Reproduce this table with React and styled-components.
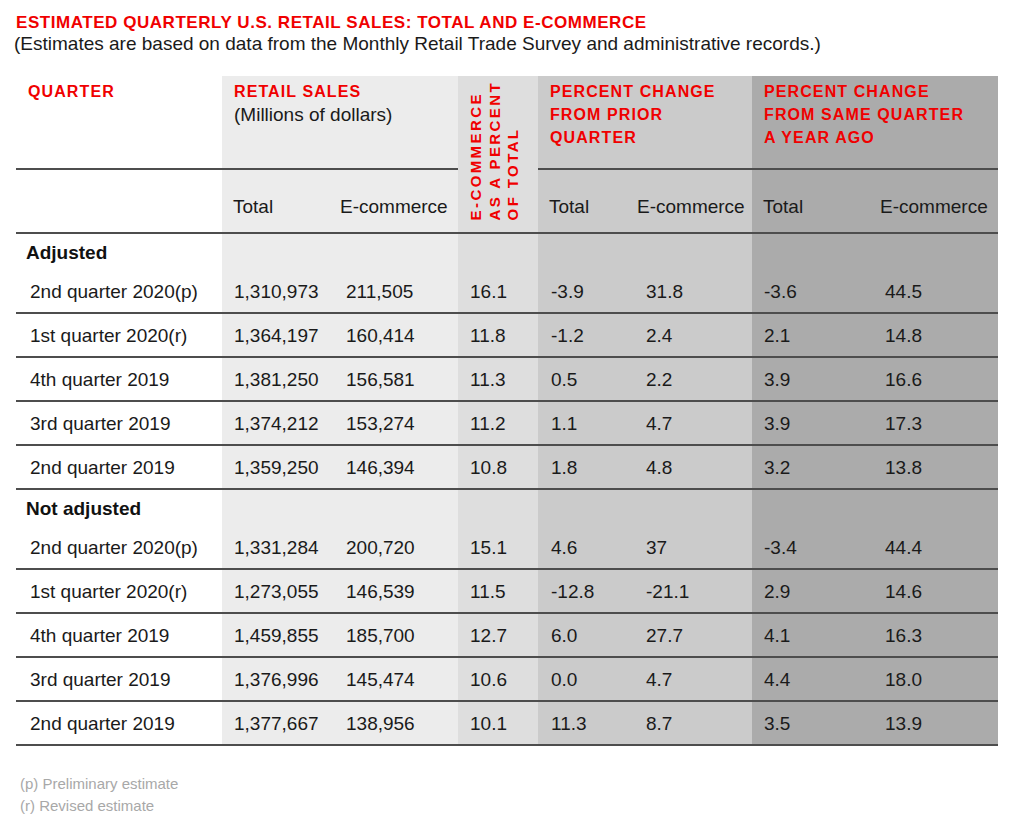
import React from 'react';
import styled, { createGlobalStyle } from 'styled-components';

const GlobalStyle = createGlobalStyle`
  html, body {
    margin: 0;
    padding: 0;
    background: #ffffff;
  }
  body {
    font-family: "Liberation Sans", Arial, sans-serif;
    color: #1a1a1a;
  }
`;

const RED = '#f00000';
const LINE = '2px solid #4d4d4d';

// column layout: width, background, data padding, sub-header padding
const COLUMNS = [
  { width: 206, bg: 'transparent', pad: 14 },
  { width: 108, bg: '#ececec', pad: 12, headPad: 11 },
  { width: 128, bg: '#ececec', pad: 16, headPad: 10 },
  { width: 80, bg: '#dedede', pad: 12 },
  { width: 88, bg: '#cbcbcb', pad: 13, headPad: 11 },
  { width: 126, bg: '#cbcbcb', pad: 20, headPad: 11 },
  { width: 118, bg: '#ababab', pad: 12, headPad: 11 },
  { width: 128, bg: '#ababab', pad: 15, headPad: 10 },
];

const GROUPS = [
  {
    label: 'Adjusted',
    rows: [
      ['2nd quarter 2020(p)', '1,310,973', '211,505', '16.1', '-3.9', '31.8', '-3.6', '44.5'],
      ['1st quarter 2020(r)', '1,364,197', '160,414', '11.8', '-1.2', '2.4', '2.1', '14.8'],
      ['4th quarter 2019', '1,381,250', '156,581', '11.3', '0.5', '2.2', '3.9', '16.6'],
      ['3rd quarter 2019', '1,374,212', '153,274', '11.2', '1.1', '4.7', '3.9', '17.3'],
      ['2nd quarter 2019', '1,359,250', '146,394', '10.8', '1.8', '4.8', '3.2', '13.8'],
    ],
  },
  {
    label: 'Not adjusted',
    rows: [
      ['2nd quarter 2020(p)', '1,331,284', '200,720', '15.1', '4.6', '37', '-3.4', '44.4'],
      ['1st quarter 2020(r)', '1,273,055', '146,539', '11.5', '-12.8', '-21.1', '2.9', '14.6'],
      ['4th quarter 2019', '1,459,855', '185,700', '12.7', '6.0', '27.7', '4.1', '16.3'],
      ['3rd quarter 2019', '1,376,996', '145,474', '10.6', '0.0', '4.7', '4.4', '18.0'],
      ['2nd quarter 2019', '1,377,667', '138,956', '10.1', '11.3', '8.7', '3.5', '13.9'],
    ],
  },
];

const Page = styled.div`
  padding: 13px 16px 0 16px;
`;

const Title = styled.h1`
  margin: 0;
  font-size: 17px;
  line-height: 19px;
  font-weight: 700;
  letter-spacing: 0.55px;
  color: ${RED};
`;

const Subtitle = styled.p`
  margin: 0 0 20px -2px;
  font-size: 19px;
  line-height: 24px;
  color: #1a1a1a;
`;

const Table = styled.table`
  width: 982px;
  table-layout: fixed;
  border-collapse: separate;
  border-spacing: 0;
`;

const Col = styled.col`
  width: ${p => p.$width}px;
  background: ${p => p.$bg};
`;

const HeadCell = styled.th`
  box-sizing: border-box;
  height: 94px;
  padding: 4px 8px 0 12px;
  vertical-align: top;
  text-align: left;
  border-bottom: ${LINE};
  font-size: 16px;
  line-height: 23px;
  font-weight: 700;
  letter-spacing: 1.1px;
  color: ${RED};
`;

const HeadNote = styled.span`
  display: block;
  font-size: 19px;
  font-weight: 400;
  letter-spacing: 0;
  color: #1a1a1a;
`;

const VerticalCell = styled.th`
  box-sizing: border-box;
  padding: 0 0 12px 9px;
  vertical-align: bottom;
  text-align: left;
  border-bottom: ${LINE};
`;

const VerticalText = styled.div`
  writing-mode: vertical-rl;
  transform: rotate(180deg);
  white-space: nowrap;
  font-size: 15px;
  line-height: 18.5px;
  font-weight: 700;
  letter-spacing: 2.4px;
  color: ${RED};
`;

const SubHeadCell = styled.th`
  box-sizing: border-box;
  height: 64px;
  padding: 0 0 13px ${p => p.$pad || 0}px;
  vertical-align: bottom;
  text-align: left;
  border-bottom: ${LINE};
  font-size: 19px;
  line-height: 24px;
  font-weight: 400;
  color: #1a1a1a;
  white-space: nowrap;
`;

const GroupCell = styled.td`
  box-sizing: border-box;
  height: 36px;
  padding: 7px 0 0 10px;
  vertical-align: top;
  font-size: 19px;
  line-height: 24px;
  font-weight: 700;
  color: #111;
`;

const Cell = styled.td`
  box-sizing: border-box;
  height: 44px;
  padding: 10px 0 0 ${p => p.$pad}px;
  vertical-align: top;
  border-bottom: ${LINE};
  font-size: 19px;
  line-height: 24px;
  color: #1a1a1a;
  white-space: nowrap;
`;

const Notes = styled.div`
  margin-top: 27px;
  padding-left: 4px;
  font-size: 15px;
  line-height: 22px;
  color: #a8a8a8;
`;

const App = () => {
  return (
    <Page>
      <GlobalStyle />
      <Title>ESTIMATED QUARTERLY U.S. RETAIL SALES: TOTAL AND E-COMMERCE</Title>
      <Subtitle>
        (Estimates are based on data from the Monthly Retail Trade Survey and administrative records.)
      </Subtitle>

      <Table>
        <colgroup>
          {COLUMNS.map((c, i) => (
            <Col key={i} $width={c.width} $bg={c.bg} />
          ))}
        </colgroup>
        <thead>
          <tr>
            <HeadCell>QUARTER</HeadCell>
            <HeadCell colSpan={2}>
              RETAIL SALES
              <HeadNote>(Millions of dollars)</HeadNote>
            </HeadCell>
            <VerticalCell rowSpan={2}>
              <VerticalText>
                E-COMMERCE<br />AS A PERCENT<br />OF TOTAL
              </VerticalText>
            </VerticalCell>
            <HeadCell colSpan={2}>
              PERCENT CHANGE<br />FROM PRIOR<br />QUARTER
            </HeadCell>
            <HeadCell colSpan={2}>
              PERCENT CHANGE<br />FROM SAME QUARTER<br />A YEAR AGO
            </HeadCell>
          </tr>
          <tr>
            <SubHeadCell />
            <SubHeadCell $pad={COLUMNS[1].headPad}>Total</SubHeadCell>
            <SubHeadCell $pad={COLUMNS[2].headPad}>E-commerce</SubHeadCell>
            <SubHeadCell $pad={COLUMNS[4].headPad}>Total</SubHeadCell>
            <SubHeadCell $pad={COLUMNS[5].headPad}>E-commerce</SubHeadCell>
            <SubHeadCell $pad={COLUMNS[6].headPad}>Total</SubHeadCell>
            <SubHeadCell $pad={COLUMNS[7].headPad}>E-commerce</SubHeadCell>
          </tr>
        </thead>
        {GROUPS.map(group => (
          <tbody key={group.label}>
            <tr>
              <GroupCell>{group.label}</GroupCell>
              {COLUMNS.slice(1).map((_, i) => (
                <GroupCell key={i} />
              ))}
            </tr>
            {group.rows.map(row => (
              <tr key={row[0]}>
                {row.map((value, i) => (
                  <Cell key={i} $pad={COLUMNS[i].pad}>{value}</Cell>
                ))}
              </tr>
            ))}
          </tbody>
        ))}
      </Table>

      <Notes>
        <div>(p) Preliminary estimate</div>
        <div>(r) Revised estimate</div>
      </Notes>
    </Page>
  );
};

export default App;
